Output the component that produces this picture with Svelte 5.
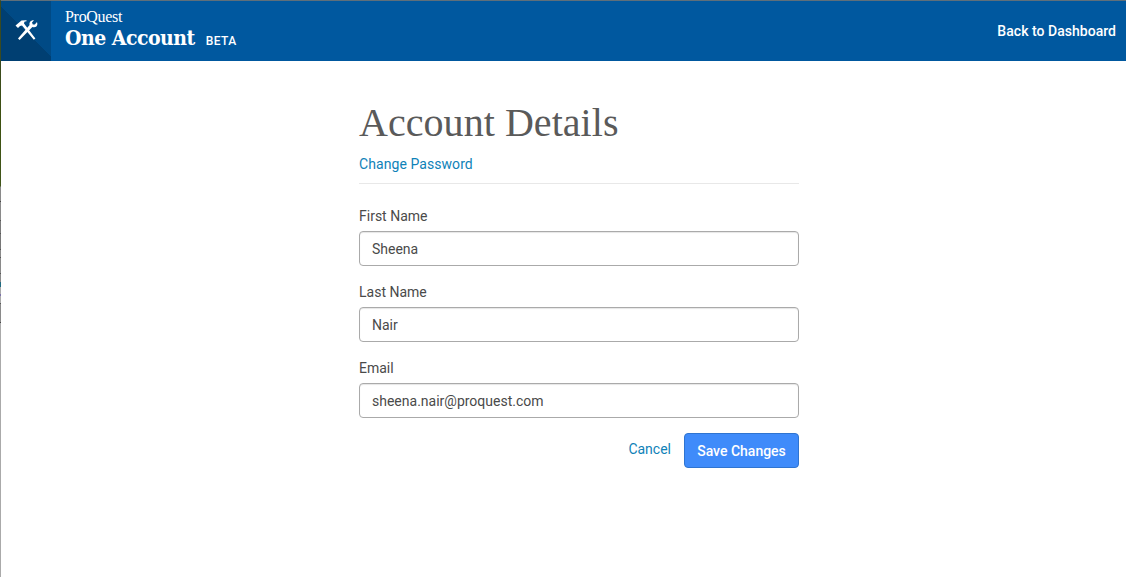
<script>
  const fields = [
    { label: 'First Name', value: 'Sheena' },
    { label: 'Last Name', value: 'Nair' },
    { label: 'Email', value: 'sheena.nair@proquest.com' }
  ];
</script>

<div class="page">
  <div class="strip"></div>
  <div class="main">
    <header>
      <div class="tile">
        <svg width="24" height="24" viewBox="0 0 24 24" fill="#fff">
          <path d="M1.5 7.5 L7.5 2.4 L12 2.2 L13 3 L10.4 3.8 L10 5.6 L21.4 20.4 L19.8 21.8 L8 7.6 L6 8 L4 10 Z" />
          <path d="M23 4 L23.4 6 C23.4 8.6 21 10 18.4 9 L5.6 22 L4 20.4 L15.6 7 C15 4.4 16.6 2 20 2.2 L18 4.4 L18.8 6.4 L20.8 6.4 Z" />
        </svg>
      </div>
      <div class="brand">
        <div class="pq">ProQuest</div>
        <div class="product"><span class="name">One Account</span><span class="beta">BETA</span></div>
      </div>
      <a class="back" href="#top">Back to Dashboard</a>
    </header>
    <main>
      <section>
        <h1>Account Details</h1>
        <a class="link change" href="#top">Change Password</a>
        <hr />
        <form>
          {#each fields as f}
            <label>
              <span>{f.label}</span>
              <input type="text" value={f.value} />
            </label>
          {/each}
          <div class="actions">
            <a class="link cancel" href="#top">Cancel</a>
            <button type="button">Save Changes</button>
          </div>
        </form>
      </section>
    </main>
  </div>
</div>

<style>
  :global(body) { margin: 0; background: #fff; }
  .page { display: flex; width: 1126px; height: 577px; overflow: hidden; font-family: Roboto, "Liberation Sans", sans-serif; }
  .strip {
    width: 1px; flex: none;
    background: linear-gradient(to bottom,
      #4a5a5c 0, #3a4a20 1px, #3a4a20 60px, #3d5010 120px, #41561a 186px, #8a8a8a 187px,
      #8a8a8a 201px, #444 201px 202px, #8a8a8a 202px 220px, #555 220px 221px, #7a7a7a 221px 233px,
      #555 233px 234px, #777 234px 249px, #555 249px 250px, #8a8a8a 250px 257px, #555 257px 258px,
      #8a8a8a 258px 273px, #555 273px 274px, #8a8a8a 274px 282px, #1f6a80 282px 287px, #aaa 287px 294px,
      #7a70a8 294px 296px, #aaa 296px 303px, #555 303px 304px, #8a8a8a 304px 322px, #444 322px 323px,
      #aaa 323px 100%);
  }
  .main { flex: 1; min-width: 0; }
  header {
    height: 60px; display: flex; align-items: stretch;
    background: #00589f; border-top: 1px solid #5f6f7a; color: #fff;
  }
  .tile {
    width: 50px; display: flex; align-items: center; justify-content: center;
    background: linear-gradient(45deg, #003f72 0 50%, #004a85 50% 100%);
  }
  .tile svg { margin: -3px 0 0 0; }
  .brand { margin-left: 14px; padding-top: 8px; }
  .pq { font: 16px/16px "Liberation Serif", serif; letter-spacing: -0.3px; }
  .product { display: flex; align-items: baseline; }
  .name { font-family: "DejaVu Serif", serif; font-weight: 700; font-stretch: condensed; font-size: 21px; line-height: 26px; letter-spacing: -0.5px; }
  .beta { font: 500 12px/14px Roboto, sans-serif; letter-spacing: 0.4px; margin-left: 11px; }
  .back { margin-left: auto; margin-right: 10px; align-self: center; margin-top: -1px; font-size: 14px; font-weight: 500; letter-spacing: 0.03px; color: #fff; text-decoration: none; }
  main { display: block; }
  section { width: 440px; margin-left: 358px; }
  h1 { margin: 38px 0 0; font: 400 40px/48px "Liberation Serif", serif; color: #5a5a5a; letter-spacing: 0.05px; }
  .link { color: #0f82b8; text-decoration: none; font-size: 14px; }
  .change { display: block; margin-top: 9px; line-height: 17px; letter-spacing: 0.07px; }
  hr { border: 0; border-top: 1px solid #e8e8e8; margin: 10px 0 0; }
  form { display: flex; flex-direction: column; padding-top: 24px; }
  label { display: block; margin-bottom: 18px; }
  label span { display: block; font-size: 14px; line-height: 17px; color: #4a4a4a; margin-bottom: 6px; }
  input {
    display: block; box-sizing: border-box; width: 100%; height: 35px; padding: 0 12px;
    border: 1px solid #aaa; border-radius: 4px; background: #fff;
    box-shadow: inset 0 1px 1px rgba(0,0,0,.1);
    font: 14px Roboto, sans-serif; color: #4a4a4a; outline: none;
  }
  .actions { display: flex; justify-content: flex-end; align-items: center; margin-top: -3px; }
  .cancel { margin: -4px 13px 0 0; }
  button {
    height: 35px; width: 115px; padding: 0; border: 1px solid #2f74d0; border-radius: 4px;
    background: #3f8bfa; color: #fff; font: 500 14px Roboto, sans-serif;
  }
</style>
